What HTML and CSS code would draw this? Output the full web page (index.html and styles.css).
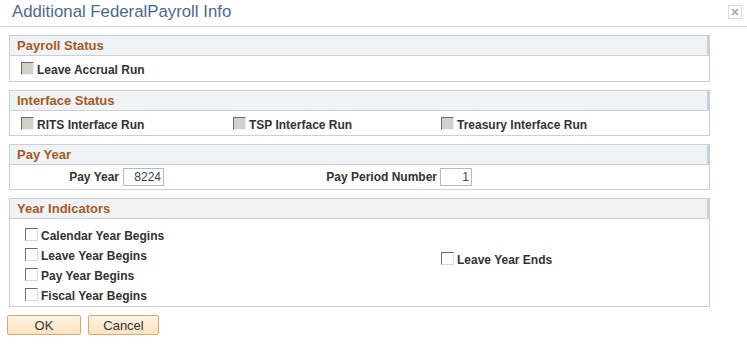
FILE: index.html
```html
<!DOCTYPE html>
<html>
<head>
<meta charset="utf-8">
<link rel="stylesheet" href="styles.css">
</head>
<body>
<div class="titlebar">
  <span class="title">Additional FederalPayroll Info</span>
  <span class="close"><svg width="8" height="8" viewBox="0 0 8 8"><path d="M1 1L7 7M7 1L1 7" stroke="#9aa3a8" stroke-width="1.6"/></svg></span>
</div>

<div class="group g1">
  <div class="ghead">Payroll Status</div>
  <div class="gbody row1">
    <label class="cb"><span class="box dis"></span>Leave Accrual Run</label>
  </div>
</div>

<div class="group">
  <div class="ghead">Interface Status</div>
  <div class="gbody row3">
    <label class="cb"><span class="box dis"></span>RITS Interface Run</label>
    <label class="cb"><span class="box dis"></span>TSP Interface Run</label>
    <label class="cb"><span class="box dis"></span>Treasury Interface Run</label>
  </div>
</div>

<div class="group">
  <div class="ghead">Pay Year</div>
  <div class="gbody payrow">
    <span class="lbl lbl1">Pay Year</span>
    <span class="inp inp1">8224</span>
    <span class="lbl lbl2">Pay Period Number</span>
    <span class="inp inp2">1</span>
  </div>
</div>

<div class="group">
  <div class="ghead">Year Indicators</div>
  <div class="gbody yrow">
    <div class="ycol">
      <label class="cb"><span class="box"></span>Calendar Year Begins</label>
      <label class="cb"><span class="box"></span>Leave Year Begins</label>
      <label class="cb"><span class="box"></span>Pay Year Begins</label>
      <label class="cb"><span class="box"></span>Fiscal Year Begins</label>
    </div>
    <div class="ycol2">
      <label class="cb"><span class="box"></span>Leave Year Ends</label>
    </div>
  </div>
</div>

<div class="buttons">
  <button class="btn ok">OK</button>
  <button class="btn cancel">Cancel</button>
</div>
</body>
</html>
```

FILE: styles.css
```css
html, body {
  margin: 0;
  padding: 0;
  background: #ffffff;
  font-family: Arial, "Liberation Sans", sans-serif;
}

.titlebar {
  height: 26px;
  border-bottom: 1px solid #d3d3d3;
  display: flex;
  align-items: center;
  justify-content: space-between;
  padding: 0 5px 0 12px;
}

.title {
  font-size: 16.8px;
  color: #4c6890;
  margin-top: -3px;
}

.close {
  width: 12px;
  height: 12px;
  border: 1px solid #d8dcde;
  display: flex;
  align-items: center;
  justify-content: center;
  margin-top: -2px;
}

.group {
  margin: 8px 0 0 9px;
  width: 699px;
  border: 1px solid #cbd0d5;
}

.ghead {
  height: 19px;
  line-height: 19px;
  background: #eff3f5;
  border-bottom: 1px solid #cbd0d5;
  color: #a9591e;
  font-weight: bold;
  font-size: 13px;
  padding-left: 7px;
  box-shadow: inset -2px 0 0 #cbd0d5;
}

.gbody {
  font-size: 12px;
  font-weight: bold;
  color: #333333;
}

.cb {
  display: flex;
  align-items: center;
  height: 20px;
}

.box {
  width: 11px;
  height: 11px;
  border-top: 1px solid #6b6b6b;
  border-left: 1px solid #6b6b6b;
  border-right: 1px solid #dcdcdc;
  border-bottom: 1px solid #dcdcdc;
  background: #ffffff;
  margin-right: 3px;
  margin-top: -3px;
  box-sizing: content-box;
}

.box.dis {
  background: #d4d0c8;
  border-right-color: #f0f0f0;
  border-bottom-color: #f0f0f0;
}

.row1 {
  height: 23px;
  padding: 2px 0 0 11px;
  display: flex;
  align-items: center;
}

.row3 {
  height: 21px;
  padding: 3px 0 0 11px;
  display: grid;
  grid-template-columns: 212px 208px 1fr;
  align-items: center;
}

.payrow {
  height: 24px;
  display: flex;
  align-items: center;
}

.lbl { text-align: right; }
.lbl1 { width: 109px; margin-right: 4px; }
.lbl2 { width: 273px; margin-right: 3px; }

.inp {
  height: 16px;
  line-height: 16px;
  border: 1px solid #b9b9b9;
  text-align: right;
  font-weight: normal;
  color: #334455;
  padding-right: 2px;
  box-sizing: content-box;
}
.inp1 { width: 37px; }
.inp2 { width: 28px; }

.yrow {
  height: 87px;
  display: flex;
  align-items: center;
}

.ycol {
  width: 416px;
  padding-left: 15px;
  padding-top: 7px;
  display: flex;
  flex-direction: column;
}

.ycol .cb { height: 19.7px; }

.ycol2 {
  margin-top: -6px;
}

.buttons {
  display: flex;
  gap: 7px;
  margin: 8px 0 0 7px;
}

.btn {
  height: 20px;
  border: 1px solid #dca772;
  border-radius: 2px;
  background: linear-gradient(#fdf3e4, #fce3be);
  font-family: Arial, "Liberation Sans", sans-serif;
  font-size: 13px;
  color: #333333;
  padding: 0;
  line-height: 17px;
}

.ok { width: 74px; }
.cancel { width: 71px; }
```
